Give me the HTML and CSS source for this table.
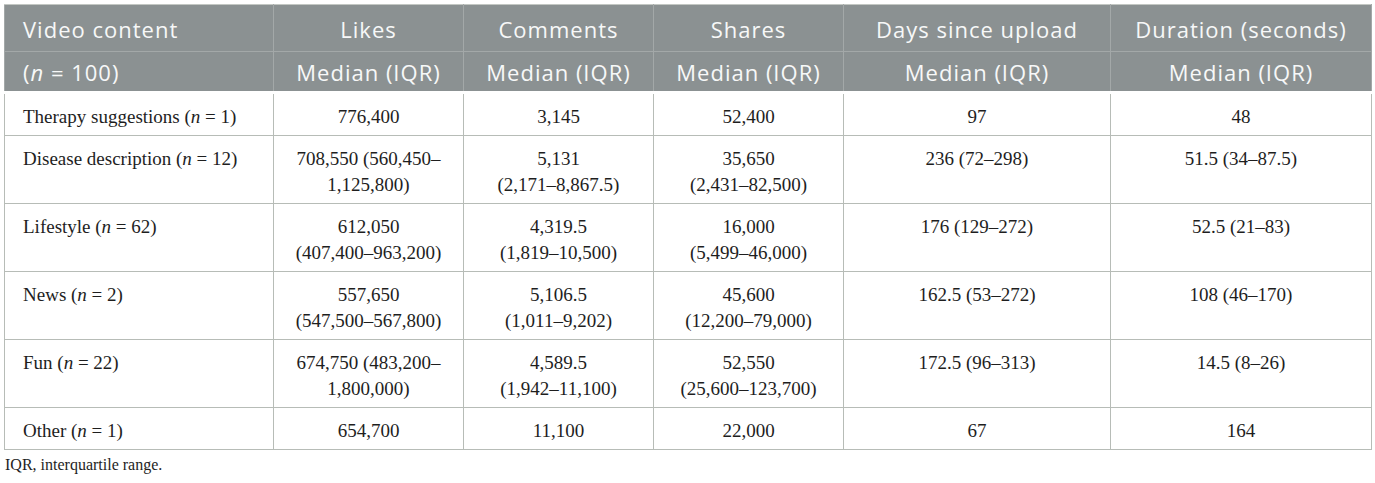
FILE: index.html
```html
<!DOCTYPE html>
<html lang="en">
<head>
<meta charset="utf-8">
<title>Video content table</title>
<link rel="stylesheet" href="styles.css">
</head>
<body>
<div class="wrap">
<table class="data">
  <colgroup>
    <col class="c1"><col class="c2"><col class="c3"><col class="c4"><col class="c5"><col class="c6">
  </colgroup>
  <thead>
    <tr class="h1">
      <th class="first">Video content</th>
      <th>Likes</th>
      <th>Comments</th>
      <th>Shares</th>
      <th>Days since upload</th>
      <th>Duration (seconds)</th>
    </tr>
    <tr class="h2">
      <th class="first">(<i>n</i> = 100)</th>
      <th>Median (IQR)</th>
      <th>Median (IQR)</th>
      <th>Median (IQR)</th>
      <th>Median (IQR)</th>
      <th>Median (IQR)</th>
    </tr>
  </thead>
  <tbody>
    <tr>
      <td class="first">Therapy suggestions (<i>n</i> = 1)</td>
      <td>776,400</td>
      <td>3,145</td>
      <td>52,400</td>
      <td>97</td>
      <td>48</td>
    </tr>
    <tr>
      <td class="first">Disease description (<i>n</i> = 12)</td>
      <td>708,550 (560,450–<br>1,125,800)</td>
      <td>5,131<br>(2,171–8,867.5)</td>
      <td>35,650<br>(2,431–82,500)</td>
      <td>236 (72–298)</td>
      <td>51.5 (34–87.5)</td>
    </tr>
    <tr>
      <td class="first">Lifestyle (<i>n</i> = 62)</td>
      <td>612,050<br>(407,400–963,200)</td>
      <td>4,319.5<br>(1,819–10,500)</td>
      <td>16,000<br>(5,499–46,000)</td>
      <td>176 (129–272)</td>
      <td>52.5 (21–83)</td>
    </tr>
    <tr>
      <td class="first">News (<i>n</i> = 2)</td>
      <td>557,650<br>(547,500–567,800)</td>
      <td>5,106.5<br>(1,011–9,202)</td>
      <td>45,600<br>(12,200–79,000)</td>
      <td>162.5 (53–272)</td>
      <td>108 (46–170)</td>
    </tr>
    <tr>
      <td class="first">Fun (<i>n</i> = 22)</td>
      <td>674,750 (483,200–<br>1,800,000)</td>
      <td>4,589.5<br>(1,942–11,100)</td>
      <td>52,550<br>(25,600–123,700)</td>
      <td>172.5 (96–313)</td>
      <td>14.5 (8–26)</td>
    </tr>
    <tr>
      <td class="first">Other (<i>n</i> = 1)</td>
      <td>654,700</td>
      <td>11,100</td>
      <td>22,000</td>
      <td>67</td>
      <td>164</td>
    </tr>
  </tbody>
</table>
<p class="note">IQR, interquartile range.</p>
</div>
</body>
</html>
```
FILE: styles.css
```css
html, body {
  margin: 0;
  padding: 0;
  background: #ffffff;
}
.wrap {
  padding: 4px;
}
.data {
  border-collapse: collapse;
  table-layout: fixed;
  width: 1367px;
  border: 1px solid #b7bcb7;
}
.c1 { width: 269px; }
.c2 { width: 190px; }
.c3 { width: 190px; }
.c4 { width: 190px; }
.c5 { width: 267px; }
.c6 { width: 261px; }

.data th {
  background: #8b9192;
  color: #f7f8f8;
  font-family: "Open Sans", "DejaVu Sans", sans-serif;
  font-weight: 400;
  font-size: 22px;
  letter-spacing: 1px;
  text-align: center;
  border-left: 1px solid #a3a8a8;
  border-right: 1px solid #a3a8a8;
  padding: 0 8px;
  white-space: nowrap;
}
.data th i {
  font-style: italic;
}
.data .h1 th {
  height: 44px;
  border-bottom: 1px solid #a3a8a8;
  border-top: 1px solid #c3c7c3;
  padding-top: 2px;
}
.data .h2 th {
  height: 39px;
  padding-top: 0;
  border-bottom: 3px solid #ffffff;
}
.data th.first,
.data td.first {
  text-align: left;
  padding-left: 18px;
}
.data td {
  font-family: "Liberation Serif", "Times New Roman", serif;
  font-size: 19px;
  line-height: 26px;
  color: #1e1e1e;
  text-align: center;
  vertical-align: top;
  border: 1px solid #b7bcb7;
  padding: 10px 8px 5px;
}
.note {
  margin: 6px 0 0 1px;
  font-family: "Liberation Serif", "Times New Roman", serif;
  font-size: 16px;
  color: #1e1e1e;
}
```
